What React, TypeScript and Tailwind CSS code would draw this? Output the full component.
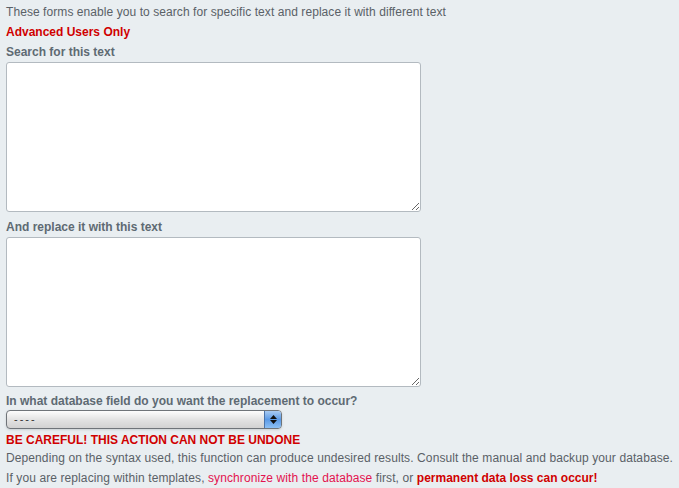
export default function App() {
  return (
    <div className="min-h-[488px] bg-[#e9eef1] px-[6px] pt-[2px] text-[12px] leading-[20px] text-[#5a6167] font-['Liberation_Sans',Arial,sans-serif]">
      <p className="tracking-[0.07px]">These forms enable you to search for specific text and replace it with different text</p>
      <p className="font-bold text-[#d00000]">Advanced Users Only</p>
      <p className="font-bold text-[#5e6a73]">Search for this text</p>
      <textarea className="block w-[415px] h-[150px] bg-white border border-[#b3bac0] rounded-[3px] resize-y outline-none" />
      <p className="mt-[5px] font-bold text-[#5e6a73]">And replace it with this text</p>
      <textarea className="block w-[415px] h-[150px] bg-white border border-[#b3bac0] rounded-[3px] resize-y outline-none" />
      <p className="mt-[4px] font-bold text-[#5e6a73]">In what database field do you want the replacement to occur?</p>
      <div className="-mt-[1px] flex w-[276px] h-[19px] rounded-[4px] border border-[#6f7479] overflow-hidden bg-gradient-to-b from-[#fdfdfd] via-[#e3e3e3] to-[#d2d2d2] shadow-sm">
        <span className="flex-1 pl-[7px] leading-[17px] text-[11px] text-[#333] tracking-[2px]">----</span>
        <span className="w-[17px] flex flex-col items-center justify-center gap-[1px] border-l border-[#4b73a8] bg-gradient-to-b from-[#a9cbf2] via-[#5b9ae6] to-[#8cc0f5]">
          <svg width="7" height="4" viewBox="0 0 7 4"><path d="M3.5 0 L7 4 L0 4 Z" fill="#111" /></svg>
          <svg width="7" height="4" viewBox="0 0 7 4"><path d="M0 0 L7 0 L3.5 4 Z" fill="#111" /></svg>
        </span>
      </div>
      <p className="mt-[1px] font-bold text-[#d00000]">BE CAREFUL! THIS ACTION CAN NOT BE UNDONE</p>
      <p className="-mt-[2px] tracking-[0.1px]">Depending on the syntax used, this function can produce undesired results. Consult the manual and backup your database.</p>
      <p className="tracking-[0.1px]">
        If you are replacing within templates, <span className="text-[#e3134f]">synchronize with the database</span> first, or{" "}
        <span className="font-bold text-[#d00000] tracking-normal">permanent data loss can occur!</span>
      </p>
    </div>
  );
}
